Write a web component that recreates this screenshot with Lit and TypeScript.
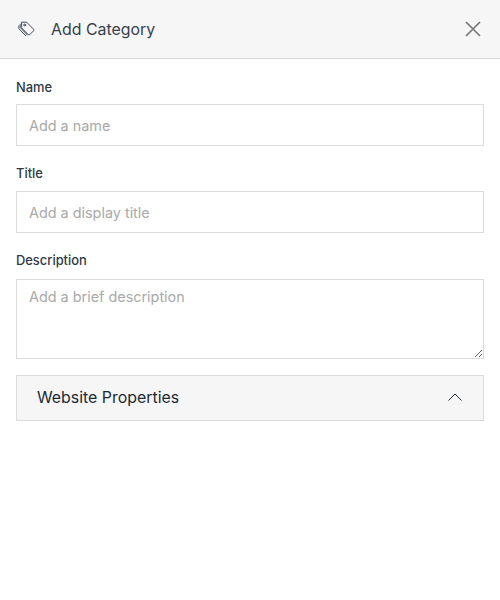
import { LitElement, html, css } from "lit";
import { customElement } from "lit/decorators.js";

@customElement("app-root")
export class AppRoot extends LitElement {
  static styles = css`
    :host {
      display: block;
      width: 500px;
      height: 600px;
      background: #fff;
      font-family: Inter, "Liberation Sans", sans-serif;
      color: #212b36;
    }
    .header {
      display: flex;
      align-items: center;
      height: 58px;
      background: #f6f6f6;
      border-bottom: 1px solid #d8d8d8;
      padding: 0 18px;
    }
    .tag {
      width: 18px;
      height: 18px;
      margin-right: 15px;
      flex: none;
    }
    .title {
      flex: 1;
      font-size: 15.9px;
      line-height: 20px;
      padding-top: 1px;
      color: #37424d;
    }
    .close {
      width: 18px;
      height: 18px;
      flex: none;
    }
    .body {
      display: flex;
      flex-direction: column;
      padding: 21px 16px 0;
    }
    .label {
      display: block;
      font-size: 12.9px;
      line-height: 15px;
      font-weight: 450;
      color: #303a45;
      margin-bottom: 10px;
    }
    .field {
      margin-bottom: 20px;
    }
    .field.first .label {
      margin-bottom: 9px;
    }
    .field.last {
      margin-bottom: 16px;
    }
    .field.last .label {
      margin-bottom: 11px;
    }
    input,
    textarea {
      display: block;
      width: 100%;
      box-sizing: border-box;
      border: 1px solid #dcdcdc;
      border-radius: 0;
      background: #fff;
      font-family: inherit;
      font-size: 14.4px;
      color: #212b36;
      padding: 0 12px;
      margin: 0;
      outline: none;
    }
    input {
      height: 42px;
    }
    textarea {
      height: 80px;
      padding-top: 8px;
      line-height: 17px;
    }
    input::placeholder,
    textarea::placeholder {
      color: #a9a9a9;
      opacity: 1;
    }
    .section {
      display: flex;
      align-items: center;
      justify-content: space-between;
      height: 46px;
      box-sizing: border-box;
      background: #f6f6f6;
      border: 1px solid #dcdcdc;
      padding: 0 21px 2px 20px;
      font-size: 15.9px;
      color: #212b36;
    }
    .chev {
      width: 14px;
      height: 8px;
    }
  `;

  render() {
    return html`
      <div class="header">
        <svg class="tag" viewBox="0 0 18 18" fill="none" stroke="#2c3a4b" stroke-width="0.9" stroke-linejoin="round" stroke-linecap="round">
          <path d="M4 2.2h4.6l7 7a1.1 1.1 0 0 1 0 1.6l-3.8 3.8a1.1 1.1 0 0 1-1.6 0l-6.2-6.4z" />
          <path d="M2.2 4.2v3.4l7 7.2" />
          <path d="M0.8 6v2.6l7 7.2" />
          <circle cx="6.6" cy="5" r="0.9" />
        </svg>
        <div class="title">Add Category</div>
        <svg class="close" viewBox="0 0 18 18" fill="none" stroke="#777" stroke-width="1.7">
          <path d="M2 2l14 14M16 2L2 16" />
        </svg>
      </div>
      <div class="body">
        <div class="field first">
          <label class="label">Name</label>
          <input placeholder="Add a name" />
        </div>
        <div class="field">
          <label class="label">Title</label>
          <input placeholder="Add a display title" />
        </div>
        <div class="field last">
          <label class="label">Description</label>
          <textarea placeholder="Add a brief description"></textarea>
        </div>
        <div class="section">
          <span>Website Properties</span>
          <svg class="chev" viewBox="0 0 14 8" fill="none" stroke="#212b36" stroke-width="1">
            <path d="M0.5 7.5L7 1l6.5 6.5" />
          </svg>
        </div>
      </div>
    `;
  }
}
